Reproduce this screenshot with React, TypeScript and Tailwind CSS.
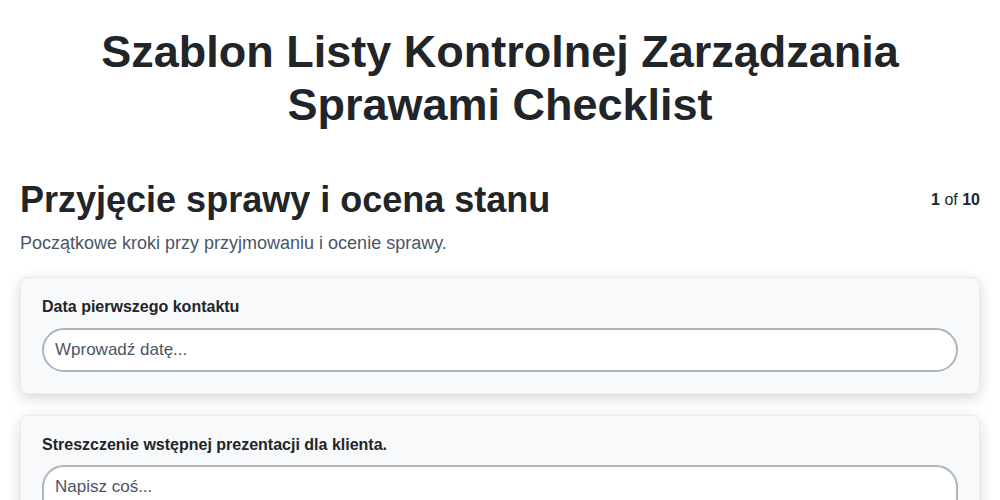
import React from "react";

export default function App() {
  return (
    <div className="min-h-screen bg-white text-[#212529]" style={{ fontFamily: '"Liberation Sans", Arial, sans-serif' }}>
      <div className="px-5">
        <h1 className="pt-[25px] text-center text-[45px] leading-[53px] font-bold text-[#212529]">
          Szablon Listy Kontrolnej Zarządzania
          <br />
          Sprawami Checklist
        </h1>
        <div className="mt-[47px] flex items-start justify-between">
          <h2 className="text-[36px] leading-[43px] font-bold text-[#212529]">Przyjęcie sprawy i ocena stanu</h2>
          <div className="mt-[10px] text-[16px] leading-[24px] text-[#212529]">
            <span className="font-bold">1</span> of <span className="font-bold">10</span>
          </div>
        </div>
        <p className="mt-[9px] text-[18px] leading-[27px] text-[#4a5568]">Początkowe kroki przy przyjmowaniu i ocenie sprawy.</p>

        <div className="mt-[20px] flex flex-col gap-[21px]">
          <div className="rounded-[8px] border border-[#e9ecef] bg-[#f8f9fa] px-[21px] pt-[17px] pb-[21px] shadow-[0_4px_14px_rgba(0,0,0,0.16)]">
            <label className="block text-[16px] leading-[24px] font-bold text-[#212529]">Data pierwszego kontaktu</label>
            <input
              placeholder="Wprowadź datę..."
              className="mt-[9px] block h-[44px] w-full rounded-full border-2 border-[#adb5bd] bg-white px-[11px] text-[17px] text-[#212529] outline-none placeholder:text-[#4a5568]"
            />
          </div>
          <div className="rounded-[8px] border border-[#e9ecef] bg-[#f8f9fa] px-[21px] pt-[17px] pb-[21px] shadow-[0_4px_14px_rgba(0,0,0,0.16)]">
            <label className="block text-[16px] leading-[24px] font-bold text-[#212529]">Streszczenie wstępnej prezentacji dla klienta.</label>
            <textarea
              placeholder="Napisz coś..."
              className="mt-[8px] block h-[100px] w-full resize-none rounded-[22px] border-2 border-[#adb5bd] bg-white px-[11px] py-[8px] text-[17px] leading-[24px] text-[#212529] outline-none placeholder:text-[#4a5568]"
            />
          </div>
        </div>
      </div>
    </div>
  );
}
